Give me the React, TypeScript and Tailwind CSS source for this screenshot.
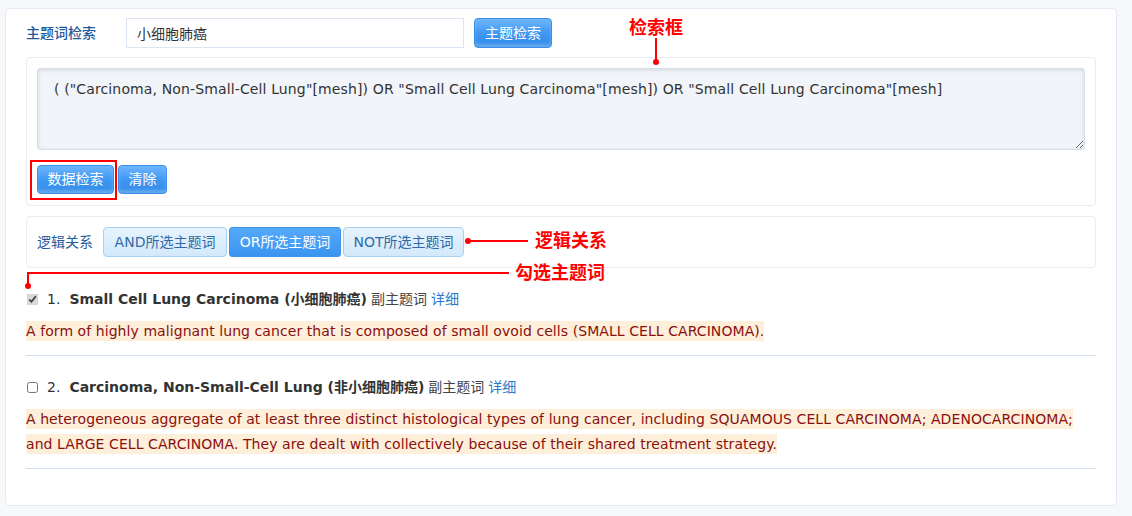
import { useState } from "react";

const btn =
  "h-[29px] px-0 whitespace-nowrap rounded-[4px] border border-[#3a8ee6] bg-gradient-to-b from-[#6db6fd] via-[#3f98f2] to-[#2f8be8] text-white text-[14px] shadow-[inset_0_-3px_3px_rgba(255,255,255,0.25)]";

const items = [
  {
    n: 1,
    title: "Small Cell Lung Carcinoma",
    cn: "小细胞肺癌",
    desc: [
      "A form of highly malignant lung cancer that is composed of small ovoid cells (SMALL CELL CARCINOMA).",
    ],
  },
  {
    n: 2,
    title: "Carcinoma, Non-Small-Cell Lung",
    cn: "非小细胞肺癌",
    desc: [
      "A heterogeneous aggregate of at least three distinct histological types of lung cancer, including SQUAMOUS CELL CARCINOMA; ADENOCARCINOMA;",
      "and LARGE CELL CARCINOMA. They are dealt with collectively because of their shared treatment strategy.",
    ],
  },
];

const logicBtns = [
  { k: "AND", w: "w-[124px]" },
  { k: "OR", w: "w-[112px]" },
  { k: "NOT", w: "w-[121px]" },
];

export default function App() {
  const [logic, setLogic] = useState("OR");
  const [checked, setChecked] = useState<Record<number, boolean>>({ 1: true, 2: false });

  return (
    <div
      className="relative w-[1132px] h-[516px] bg-[#f6f8fc] pt-[8px] pl-[5px]"
      style={{ fontFamily: '"DejaVu Sans", "Noto Sans CJK SC", sans-serif' }}
    >
      <div className="w-[1112px] h-[498px] bg-white border border-[#e4eaf3] rounded-[4px] pl-[20px] pr-[20px] pt-[9px]">
        {/* search row */}
        <div className="flex items-center h-[30px]">
          <div className="w-[100px] text-[14px] text-[#1d5a9e] font-medium">主题词检索</div>
          <input
            defaultValue="小细胞肺癌"
            className="w-[338px] h-[30px] border border-[#dce6f2] px-[10px] text-[14px] text-[#333] outline-none"
          />
          <button className={`${btn} ml-[10px] w-[78px] h-[30px]`}>主题检索</button>
        </div>

        {/* query box */}
        <div className="mt-[9px] border border-[#e6ecf4] rounded-[4px] pt-[10px] px-[10px] h-[149px]">
          <textarea
            defaultValue={'( ("Carcinoma, Non-Small-Cell Lung"[mesh]) OR "Small Cell Lung Carcinoma"[mesh]) OR "Small Cell Lung Carcinoma"[mesh]'}
            className="block w-full h-[82px] bg-[#f1f4f9] border border-[#d6dfea] rounded-[3px] shadow-[inset_0_1px_4px_rgba(0,0,0,0.12)] px-[16px] pt-[10px] text-[14px] tracking-[0.13px] text-[#333] outline-none resize-y"
          />
          <div className="flex gap-[4px] mt-[15px]">
            <button className={`${btn} w-[77px]`}>数据检索</button>
            <button className={`${btn} w-[49px]`}>清除</button>
          </div>
        </div>

        {/* logic */}
        <div className="mt-[10px] border border-[#e6ecf4] rounded-[4px] h-[52px] flex items-center pl-[10px]">
          <div className="text-[14px] text-[#1d5a9e] w-[66px]">逻辑关系</div>
          {logicBtns.map(({ k, w }) => (
            <button
              key={k}
              onClick={() => setLogic(k)}
              className={
                logic === k
                  ? `${w} h-[30px] px-0 whitespace-nowrap mr-[2px] rounded-[3px] border border-[#3b93ea] bg-gradient-to-b from-[#55a9fa] to-[#3a94ef] text-white text-[14px]`
                  : `${w} h-[30px] px-0 whitespace-nowrap mr-[2px] rounded-[4px] border border-[#a9d1f2] bg-gradient-to-b from-[#e6f3fd] to-[#d3e9fb] text-[#2f6aa6] text-[14px]`
              }
            >
              {k}所选主题词
            </button>
          ))}
        </div>

        {/* items */}
        <div className="mt-[18px]">
          {items.map((it) => (
            <div key={it.n} className="border-b border-[#d3e0ec] pb-[11px] mb-[18px]">
              <div className="flex items-center h-[26px] text-[14px] text-[#333]">
                <input
                  type="checkbox"
                  checked={checked[it.n]}
                  onChange={() => setChecked({ ...checked, [it.n]: !checked[it.n] })}
                  className="w-[11px] h-[11px] ml-[1px] accent-[#d8d8d8]"
                />
                <span className="ml-[9px]">{it.n}.</span>
                <span className="ml-[9px] font-bold text-[#333]">
                  {it.title} ({it.cn})
                </span>
                <span className="ml-[4px] text-[#444]">副主题词</span>
                <span className="ml-[4px] text-[#2a78c8]">详细</span>
              </div>
              <div className="mt-[7px] text-[14px] leading-[25px] tracking-[0.07px] text-[#8a1010]">
                {it.desc.map((d, i) => (
                  <div key={i}>
                    <span className="bg-[#fdefd9] py-[2px]">{d}</span>
                  </div>
                ))}
              </div>
            </div>
          ))}
        </div>
      </div>

      {/* annotations */}
      <div className="absolute left-[30px] top-[160px] w-[87px] h-[40px] border-2 border-[#f00]" />

      <div className="absolute left-[629px] top-[17px] text-[18px] font-bold text-[#f00] leading-[22px]">检索框</div>
      <div className="absolute left-[655px] top-[38px] w-[2px] h-[23px] bg-[#f00]" />
      <div className="absolute left-[653px] top-[59px] w-[6px] h-[6px] rounded-full bg-[#f00]" />

      <div className="absolute left-[465px] top-[238px] w-[6px] h-[6px] rounded-full bg-[#f00]" />
      <div className="absolute left-[468px] top-[240px] w-[60px] h-[2px] bg-[#f00]" />
      <div className="absolute left-[535px] top-[230px] text-[18px] font-bold text-[#f00] leading-[22px]">逻辑关系</div>

      <div className="absolute left-[27px] top-[272px] w-[482px] h-[2px] bg-[#f00]" />
      <div className="absolute left-[27px] top-[272px] w-[2px] h-[13px] bg-[#f00]" />
      <div className="absolute left-[25px] top-[283px] w-[6px] h-[6px] rounded-full bg-[#f00]" />
      <div className="absolute left-[515px] top-[262px] text-[18px] font-bold text-[#f00] leading-[22px]">勾选主题词</div>
    </div>
  );
}
